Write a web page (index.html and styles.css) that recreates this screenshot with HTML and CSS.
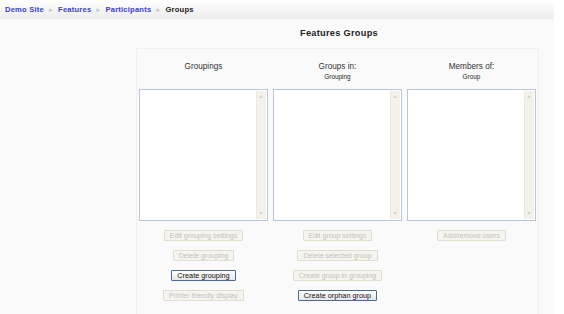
FILE: index.html
```html
<!DOCTYPE html>
<html lang="en">
<head>
    <meta charset="UTF-8">
    <title>Features: Groups</title>
    <link rel="stylesheet" href="styles.css">
</head>
<body>
    <div class="page">
        <div class="navbar">
            <a href="#">Demo Site</a>
            <span class="sep">&#9658;</span>
            <a href="#">Features</a>
            <span class="sep">&#9658;</span>
            <a href="#">Participants</a>
            <span class="sep">&#9658;</span>
            <span class="current">Groups</span>
        </div>

        <h2 class="title">Features Groups</h2>

        <div class="panel">
            <div class="column">
                <div class="heading">
                    <p class="label">Groupings</p>
                </div>
                <div class="listbox"><div class="scroll"><span class="up"></span><span class="down"></span></div></div>
                <div class="buttons">
                    <button disabled>Edit grouping settings</button>
                    <button disabled>Delete grouping</button>
                    <button class="active">Create grouping</button>
                    <button disabled>Printer friendly display</button>
                </div>
            </div>

            <div class="column">
                <div class="heading">
                    <p class="label">Groups in:</p>
                    <p class="sub">Grouping</p>
                </div>
                <div class="listbox"><div class="scroll"><span class="up"></span><span class="down"></span></div></div>
                <div class="buttons">
                    <button disabled>Edit group settings</button>
                    <button disabled>Delete selected group</button>
                    <button disabled>Create group in grouping</button>
                    <button class="active">Create orphan group</button>
                </div>
            </div>

            <div class="column">
                <div class="heading">
                    <p class="label">Members of:</p>
                    <p class="sub">Group</p>
                </div>
                <div class="listbox"><div class="scroll"><span class="up"></span><span class="down"></span></div></div>
                <div class="buttons">
                    <button disabled>Add/remove users</button>
                </div>
            </div>
        </div>
    </div>
</body>
</html>
```

FILE: styles.css
```css
body {
    font-family: "Liberation Sans", Arial, sans-serif;
    background-color: #fff;
    color: #222;
    margin: 0;
    padding: 0;
}

.page {
    width: 554px;
    min-height: 314px;
    background-color: #fafafa;
}

.navbar {
    height: 19px;
    background: linear-gradient(#fff, #ececec);
    display: flex;
    align-items: center;
    padding-left: 5px;
    font-size: 7.6px;
    font-weight: bold;
    letter-spacing: 0.2px;
}

.navbar a {
    color: #3a3fd0;
    text-decoration: none;
}

.navbar .sep {
    color: #c4c4c4;
    font-size: 6px;
    margin: 0 4px;
}

.navbar .current {
    color: #222;
}

.title {
    margin: 9px 0 0 0;
    padding-left: 136px;
    width: 406px;
    text-align: center;
    font-size: 9.2px;
    letter-spacing: 0.3px;
    color: #222;
    height: 20px;
}

.panel {
    margin-left: 136px;
    width: 397px;
    padding: 8px 2px 30px 2px;
    border: 1px solid #f0f0f0;
    display: grid;
    grid-template-columns: 129px 129px 129px;
    column-gap: 5px;
}

.heading {
    height: 32px;
    text-align: center;
}

.heading p {
    margin: 0;
}

.label {
    font-size: 8.2px;
    color: #333;
    padding-top: 5px;
    line-height: 10px;
}

.sub {
    font-size: 6.4px;
    color: #222;
    line-height: 9px;
}

.listbox {
    height: 130px;
    border: 1px solid #b9c6d6;
    background-color: #fff;
    position: relative;
}

.scroll {
    position: absolute;
    top: 1px;
    right: 1px;
    bottom: 1px;
    width: 9px;
    background-color: #f3f1ea;
    border-left: 1px solid #ebe8e0;
}

.scroll span {
    position: absolute;
    left: 2px;
    width: 0;
    height: 0;
    border-left: 2.5px solid transparent;
    border-right: 2.5px solid transparent;
}

.scroll .up {
    top: 4px;
    border-bottom: 3px solid #d6d3cb;
}

.scroll .down {
    bottom: 4px;
    border-top: 3px solid #d6d3cb;
}

.buttons {
    display: flex;
    flex-direction: column;
    align-items: center;
    gap: 9px;
    margin-top: 9px;
}

button {
    font-family: "Liberation Sans", Arial, sans-serif;
    font-size: 7px;
    height: 11px;
    line-height: 9px;
    padding: 0 5px;
    border-radius: 1px;
    border: 1px solid #e2ddd0;
    background-color: #f6f4ef;
    color: #c4c2bc;
}

button.active {
    font-size: 7.3px;
    border: 1px solid #4e6a92;
    background: linear-gradient(#fff, #e6e6e6);
    color: #111;
}
```
